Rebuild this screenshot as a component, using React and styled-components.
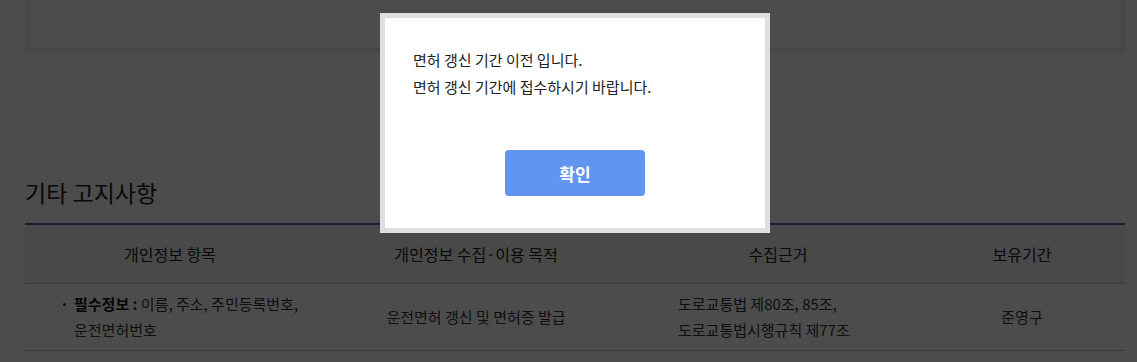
import styled, { createGlobalStyle } from 'styled-components'

const GlobalStyle = createGlobalStyle`
  body {
    margin: 0;
    background: #fff;
    font-family: "Noto Sans CJK KR", "Noto Sans", sans-serif;
    color: #333;
  }
`

const Page = styled.div`
  padding: 0 12px 0 25px;
`

const TopBox = styled.div`
  height: 48px;
  border: 5px solid #f0f0f0;
  border-top: none;
`

const Title = styled.h2`
  margin: 124px 0 16px;
  font-size: 23px;
  font-weight: 400;
  line-height: 30px;
  color: #222;
`

const Table = styled.table`
  width: 1100px;
  border-collapse: collapse;
  table-layout: fixed;
  border-top: 2px solid #4a66c0;
`

const Th = styled.th`
  height: 58px;
  padding: 0;
  background: #f5f5f5;
  border-bottom: 1px solid #c8c8c8;
  font-size: 16px;
  font-weight: 400;
  color: #222;
  text-align: center;
`

const Td = styled.td`
  height: 66px;
  padding: ${p => p.$pad || '0'};
  border-bottom: 1px solid #c8c8c8;
  font-size: 15px;
  line-height: 26px;
  color: #333;
  text-align: ${p => p.$align || 'center'};
  vertical-align: middle;
`

const List = styled.ul`
  margin: 0;
  padding: 0;
  list-style: none;
`

const Item = styled.li`
  position: relative;
  padding-left: 11px;
  &::before {
    content: '';
    position: absolute;
    left: 0;
    top: 12px;
    width: 3px;
    height: 3px;
    border-radius: 50%;
    background: #333;
  }
  b {
    color: #111;
    font-weight: 700;
  }
`

const Overlay = styled.div`
  position: fixed;
  inset: 0;
  background: rgba(0, 0, 0, 0.7);
`

const Modal = styled.div`
  position: fixed;
  left: 380px;
  top: 13px;
  width: 390px;
  box-sizing: border-box;
  border: 5px solid #dfdfdf;
  background: #fff;
  padding: 28px 28px 32px;
`

const Message = styled.p`
  margin: 0;
  font-size: 15px;
  line-height: 27px;
  color: #222;
`

const Actions = styled.div`
  display: flex;
  justify-content: center;
  margin-top: 50px;
`

const Button = styled.button`
  width: 140px;
  height: 46px;
  border: none;
  border-radius: 4px;
  background: #6195ef;
  color: #fff;
  font-family: inherit;
  font-size: 17px;
  font-weight: 700;
  cursor: pointer;
`

export default function App() {
  return (
    <>
      <GlobalStyle />
      <Page>
        <TopBox />
        <Title>기타 고지사항</Title>
        <Table>
          <colgroup>
            <col style={{ width: 290 }} />
            <col style={{ width: 322 }} />
            <col style={{ width: 282 }} />
            <col style={{ width: 206 }} />
          </colgroup>
          <thead>
            <tr>
              <Th>개인정보 항목</Th>
              <Th>개인정보 수집·이용 목적</Th>
              <Th>수집근거</Th>
              <Th>보유기간</Th>
            </tr>
          </thead>
          <tbody>
            <tr>
              <Td $align='left' $pad='0 10px 0 38px'>
                <List>
                  <Item><b>필수정보 :</b> 이름, 주소, 주민등록번호, 운전면허번호</Item>
                </List>
              </Td>
              <Td>운전면허 갱신 및 면허증 발급</Td>
              <Td $align='left' $pad='0 10px 0 41px'>
                도로교통법 제80조, 85조,<br />
                도로교통법시행규칙 제77조
              </Td>
              <Td>준영구</Td>
            </tr>
          </tbody>
        </Table>
      </Page>
      <Overlay />
      <Modal role='dialog'>
        <Message>면허 갱신 기간 이전 입니다.</Message>
        <Message>면허 갱신 기간에 접수하시기 바랍니다.</Message>
        <Actions>
          <Button>확인</Button>
        </Actions>
      </Modal>
    </>
  )
}
